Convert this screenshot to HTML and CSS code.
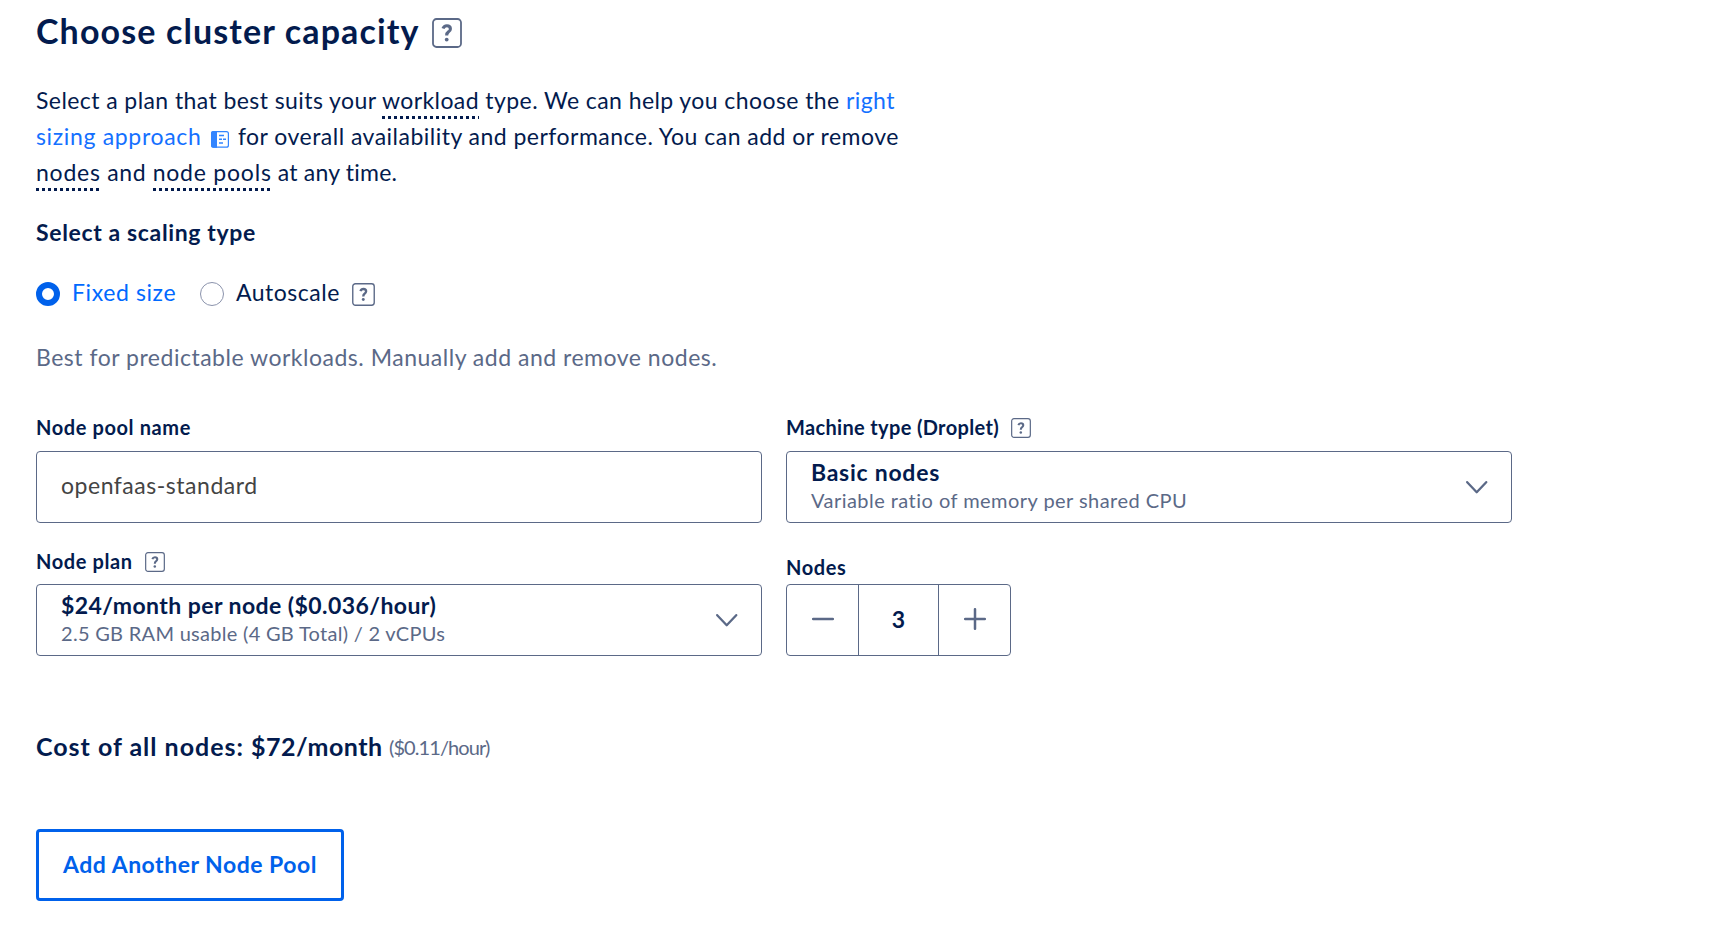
FILE: index.html
```html
<!DOCTYPE html>
<html lang="en">
<head>
<meta charset="utf-8">
<title>Choose cluster capacity</title>
<link rel="stylesheet" href="styles.css">
</head>
<body>
<svg class="sprite" width="0" height="0">
  <symbol id="help" viewBox="0 0 30 30">
    <rect x="1" y="1" width="28" height="28" rx="3.5" fill="none" stroke="currentColor" stroke-width="1.8"/>
    <path d="M11 10.6Q12 7.8 14.9 7.8Q18.4 7.8 18.4 10.9Q18.4 12.7 16.4 13.9Q14.7 15 14.7 17.6" fill="none" stroke="currentColor" stroke-width="3.1"/>
    <circle cx="14.7" cy="21.6" r="1.9" fill="currentColor"/>
  </symbol>
  <symbol id="chevron" viewBox="0 0 22 13">
    <path d="M1.2 1.2L10.7 11.2L20.2 1.2" fill="none" stroke="currentColor" stroke-width="2.3" stroke-linecap="round" stroke-linejoin="round"/>
  </symbol>
</svg>
<main class="page">
  <header class="heading">
    <h1 class="title">Choose cluster capacity</h1>
    <svg class="help help-lg"><use href="#help"/></svg>
  </header>
  <p class="intro">
    <span class="line line-1">Select a plan that best suits your <span class="term">workload</span> type. We can help you choose the <a class="link">right</a></span>
    <span class="line line-2"><a class="link approach">sizing approach</a><svg class="doc" viewBox="0 0 18 17"><rect x=".6" y=".6" width="16.8" height="15.6" rx="2" fill="#fff" stroke="currentColor" stroke-width="1.2"/><path d="M2 0H6V16.8H2Q0 16.8 0 14.8V2Q0 0 2 0Z" fill="currentColor"/><path d="M8 4.5H13M8 8.2H11M12 8.2H15M8 12H12" stroke="currentColor" stroke-width="1.4"/></svg>for overall availability and performance. You can add or remove</span>
    <span class="line line-3"><span class="term term-wide">nodes</span> and <span class="term term-wide">node pools</span><span class="tail"> at any time.</span></span>
  </p>
  <h2 class="subtitle">Select a scaling type</h2>
  <div class="scaling">
    <span class="radio radio-on"></span><span class="option option-on">Fixed size</span>
    <span class="radio"></span><span class="option">Autoscale</span>
    <svg class="help help-md"><use href="#help"/></svg>
  </div>
  <p class="hint">Best for predictable workloads. Manually add and remove nodes.</p>
  <section class="grid">
    <div class="field">
      <div class="label">Node pool name</div>
      <div class="box"><span class="value">openfaas-standard</span></div>
    </div>
    <div class="field">
      <div class="label label-machine">Machine type (Droplet)<svg class="help help-sm"><use href="#help"/></svg></div>
      <div class="box select">
        <div class="choice"><div class="name">Basic nodes</div><div class="detail">Variable ratio of memory per shared CPU</div></div>
        <svg class="chevron"><use href="#chevron"/></svg>
      </div>
    </div>
    <div class="field">
      <div class="label label-plan">Node plan<svg class="help help-sm"><use href="#help"/></svg></div>
      <div class="box select">
        <div class="choice"><div class="name name-plan">$24/month per node ($0.036/hour)</div><div class="detail detail-plan">2.5 GB RAM usable (4 GB Total) / 2 vCPUs</div></div>
        <svg class="chevron"><use href="#chevron"/></svg>
      </div>
    </div>
    <div class="field">
      <div class="label label-nodes">Nodes</div>
      <div class="stepper">
        <div class="step"><svg class="sign" viewBox="0 0 22 22"><path d="M1.2 11H20.8"/></svg></div>
        <div class="count">3</div>
        <div class="step"><svg class="sign" viewBox="0 0 22 22"><path d="M1.2 11H20.8M11 1.2V20.8"/></svg></div>
      </div>
    </div>
  </section>
  <div class="cost"><span class="cost-label">Cost of all nodes:</span><span class="cost-value">$72/month</span><span class="cost-rate">($0.11/hour)</span></div>
  <button class="add">Add Another Node Pool</button>
</main>
</body>
</html>
```
FILE: styles.css
```css
* { box-sizing: border-box; }
body {
  margin: 0;
  background: #fff;
  color: #031b4e;
  font-family: Lato, "Liberation Sans", sans-serif;
  font-size: 23px;
  font-variant-ligatures: none;
}
h1, h2, p { margin: 0; }
.sprite { display: block; position: absolute; }
.page { padding: 10px 36px 0; }
.heading { display: flex; align-items: flex-start; height: 40px; }
.title { font-size: 34px; line-height: 41px; font-weight: 700; letter-spacing: 1.12px; width: 396px; white-space: nowrap; }
.help { color: #5b6987; flex: none; }
.help-lg { width: 30px; height: 30px; margin-top: 8px; }
.help-md { width: 23px; height: 23px; margin: 1px 0 0 12.5px; }
.help-sm { width: 20px; height: 20px; margin: 3px 0 0 12px; }
.intro { margin-top: 32px; line-height: 36px; }
.line { display: block; white-space: nowrap; }
.line-1 { letter-spacing: .42px; }
.line-2 { letter-spacing: .48px; }
.line-3 { letter-spacing: .6px; }
.approach { letter-spacing: .66px; }
.link { color: #1470ff; }
.term {
  padding-bottom: 5px;
  background: repeating-linear-gradient(90deg, #031b4e 0 3px, transparent 3px 6px) left bottom / 100% 3px no-repeat;
}
.term-wide { letter-spacing: .78px; }
.tail { letter-spacing: .22px; }
.doc { width: 18px; height: 17px; margin: 0 9px 0 9.5px; vertical-align: -2.5px; color: #3385ff; }
.subtitle { margin-top: 28px; font-size: 23px; line-height: 28px; font-weight: 700; letter-spacing: .64px; }
.scaling { display: flex; align-items: flex-start; height: 24px; margin-top: 36px; }
.radio { width: 24px; height: 24px; border: 1px solid #8b93ac; border-radius: 50%; }
.radio-on { border: 6px solid #0061eb; }
.option { margin-left: 12px; line-height: 21px; letter-spacing: .5px; }
.option-on { width: 128px; color: #0069ff; letter-spacing: .6px; }
.hint { margin-top: 37px; line-height: 28px; color: #5b6987; letter-spacing: .51px; }
.grid { display: grid; grid-template-columns: 726px 726px; grid-template-rows: 108px 133px; column-gap: 24px; margin-top: 44px; }
.field { display: flex; flex-direction: column; justify-content: flex-end; }
.label { display: flex; height: 24px; margin-bottom: 12px; font-size: 20px; line-height: 25px; font-weight: 700; letter-spacing: .6px; }
.label-machine { letter-spacing: .34px; }
.label-plan { margin-bottom: 11px; }
.label-nodes { margin-bottom: 5px; }
.box { display: flex; height: 72px; border: 1px solid #5b6987; border-radius: 4px; padding: 6px 23px 0 24px; }
.value { margin-top: 13px; line-height: 28px; color: #444; letter-spacing: .53px; }
.select { justify-content: space-between; }
.name { line-height: 28px; font-weight: 700; letter-spacing: .74px; }
.name-plan { letter-spacing: .43px; }
.detail { margin-top: 2px; font-size: 20px; line-height: 24px; color: #5b6987; letter-spacing: .46px; }
.detail-plan { letter-spacing: .29px; }
.chevron { width: 22px; height: 13px; margin-top: 23px; color: #5b6987; }
.stepper { display: flex; width: 225px; height: 72px; border: 1px solid #5b6987; border-radius: 4px; }
.step { flex: 1; display: flex; justify-content: center; padding-top: 22.5px; }
.sign { width: 22px; height: 22px; fill: none; stroke: #5b6987; stroke-width: 2.5; stroke-linecap: round; }
.count { width: 81px; border: solid #5b6987; border-width: 0 1px; text-align: center; font-weight: 700; line-height: 69px; }
.cost { display: flex; height: 30px; margin-top: 75px; line-height: 30px; font-size: 25px; font-weight: 700; white-space: nowrap; }
.cost-label { width: 215px; letter-spacing: .98px; }
.cost-value { width: 138px; letter-spacing: .52px; }
.cost-rate { font-size: 20px; font-weight: 400; line-height: 32px; color: #5b6987; letter-spacing: -.92px; }
.add {
  display: block;
  width: 308px;
  height: 72px;
  margin-top: 68px;
  padding: 0 0 3px;
  border: 3px solid #0061eb;
  border-radius: 4px;
  background: #fff;
  color: #0061eb;
  font: 700 23px/28px Lato, "Liberation Sans", sans-serif;
  letter-spacing: .5px;
}
```
